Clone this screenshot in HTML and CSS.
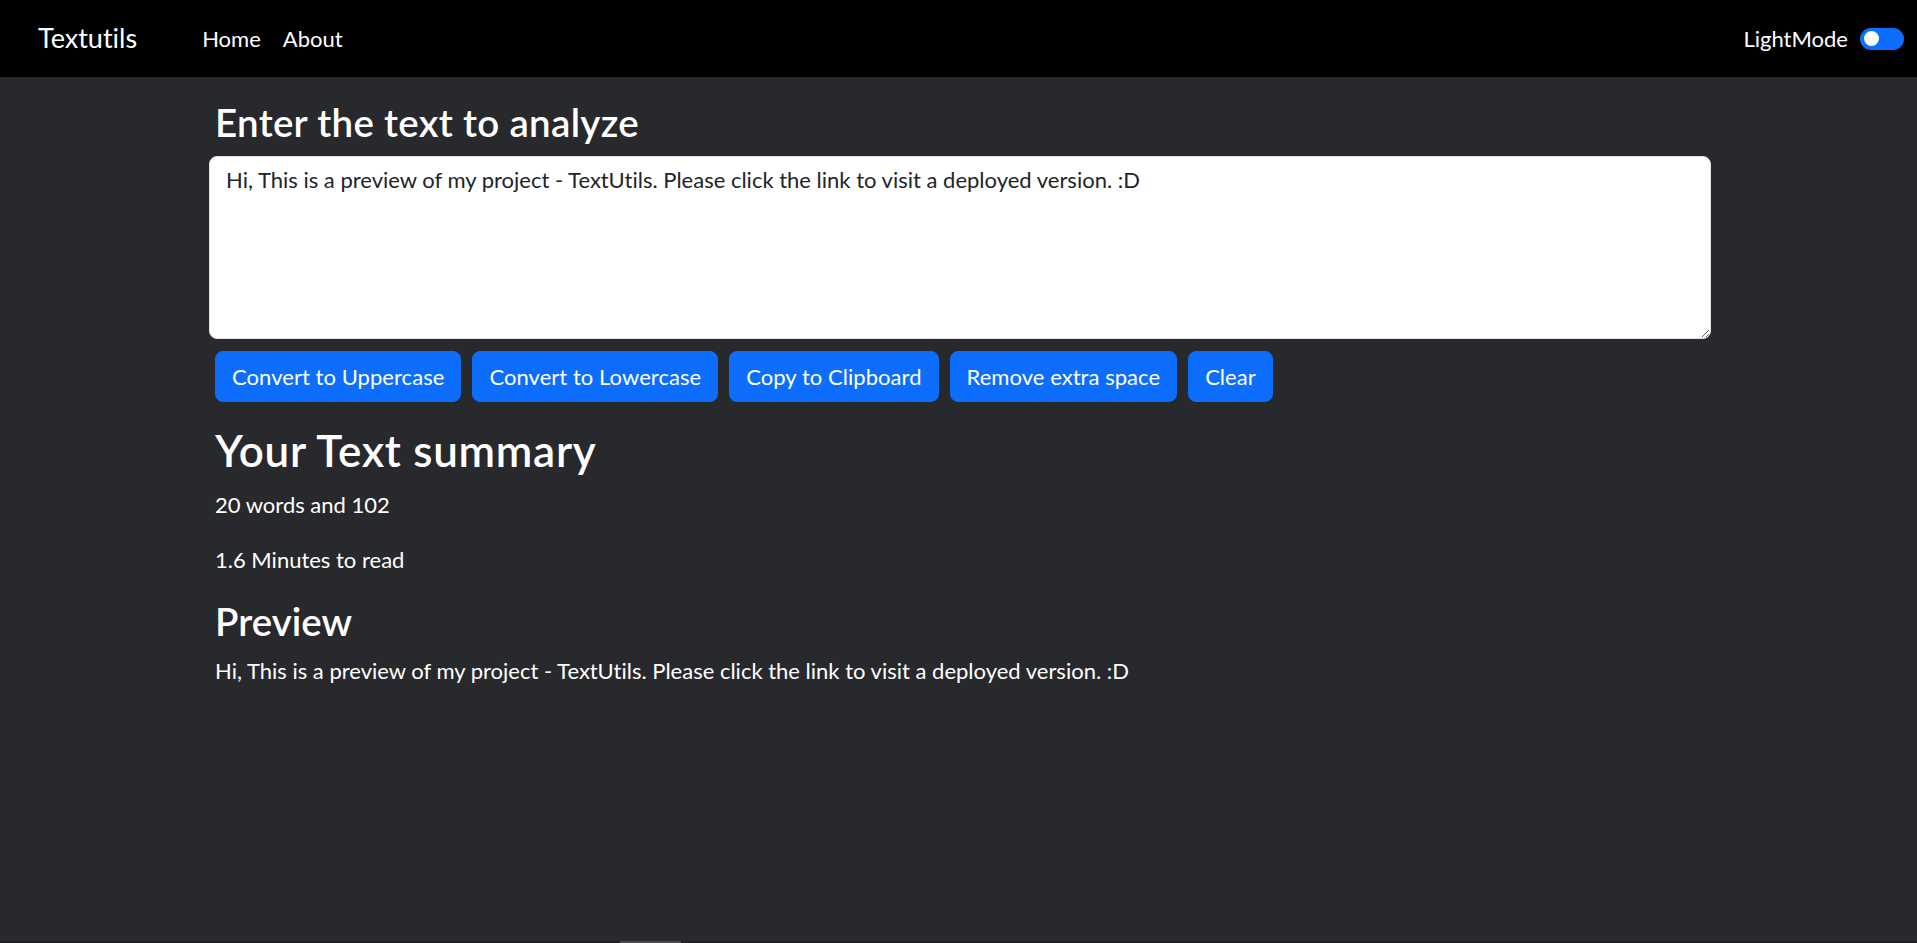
FILE: index.html
```html
<!DOCTYPE html>
<html lang="en">
<head>
<meta charset="utf-8">
<title>TextUtils</title>
<link rel="stylesheet" href="styles.css">
</head>
<body>
<nav class="navbar">
  <a class="brand" href="#">Textutils</a>
  <ul class="nav-links">
    <li><a class="nav-link active" href="#">Home</a></li>
    <li><a class="nav-link" href="#">About</a></li>
  </ul>
  <div class="mode-switch">
    <label class="mode-label" for="mode">LightMode</label>
    <span class="switch" id="mode"><span class="knob"></span></span>
  </div>
</nav>

<main class="page">
  <h3 class="title">Enter the text to analyze</h3>
  <textarea class="text-input" rows="5">Hi, This is a preview of my project - TextUtils. Please click the link to visit a deployed version. :D</textarea>
  <div class="actions">
    <button class="btn">Convert to Uppercase</button>
    <button class="btn">Convert to Lowercase</button>
    <button class="btn">Copy to Clipboard</button>
    <button class="btn">Remove extra space</button>
    <button class="btn">Clear</button>
  </div>

  <section class="summary">
    <h2 class="summary-title">Your Text summary</h2>
    <p class="stat">20 words and 102</p>
    <p class="stat">1.6 Minutes to read</p>
    <h3 class="preview-title">Preview</h3>
    <p class="preview-text">Hi, This is a preview of my project - TextUtils. Please click the link to visit a deployed version. :D</p>
  </section>
</main>

<div class="hscroll"><span class="hscroll-thumb"></span></div>
</body>
</html>
```

FILE: styles.css
```css
* { box-sizing: border-box; }

html, body {
  margin: 0;
  padding: 0;
}

body {
  background: #28292c;
  color: #ffffff;
  font-family: Lato, "Noto Sans", "Liberation Sans", sans-serif;
  font-size: 22px;
  line-height: 1.5;
  font-variant-ligatures: none;
  min-height: 943px;
}

/* ---------- navbar ---------- */
.navbar {
  height: 77px;
  background: #000000;
  display: flex;
  align-items: center;
  padding: 0 13px 0 38px;
}

.brand {
  color: #ffffff;
  text-decoration: none;
  font-size: 27px;
  line-height: 1.5;
  margin-right: 54px;
}

.nav-links {
  list-style: none;
  margin: 0;
  padding: 0;
  display: flex;
}

.nav-link {
  display: block;
  color: #ffffff;
  text-decoration: none;
  font-size: 22px;
  padding: 0 11px;
}

.mode-switch {
  margin-left: auto;
  display: flex;
  align-items: center;
  gap: 12px;
}

.mode-label {
  color: #ffffff;
  font-size: 22px;
}

.switch {
  width: 44px;
  height: 22px;
  border-radius: 11px;
  background: #0d6efd;
  display: flex;
  align-items: center;
  padding-left: 4px;
}

.knob {
  width: 15px;
  height: 15px;
  border-radius: 50%;
  background: #ffffff;
}

/* ---------- page ---------- */
.page {
  padding: 22px 206px 0 209px;
}

.title,
.preview-title {
  font-size: 38.5px;
  line-height: 1.2;
  font-weight: 600;
  letter-spacing: 0.3px;
  margin: 0 0 11px;
  padding-left: 6px;
}

.text-input {
  display: block;
  width: 100%;
  height: 183px;
  margin: 0;
  padding: 6px 16px;
  border: 1px solid #dee2e6;
  border-radius: 8px;
  background: #ffffff;
  color: #212529;
  font-family: inherit;
  font-size: 22px;
  line-height: 1.5;
  font-variant-ligatures: none;
  resize: vertical;
}

.actions {
  display: flex;
  gap: 11px;
  margin-top: 12px;
  padding-left: 6px;
}

.btn {
  background: #0d6efd;
  color: #ffffff;
  border: 1px solid #0d6efd;
  border-radius: 8px;
  font-family: inherit;
  font-size: 22px;
  line-height: 1.5;
  letter-spacing: 0.05px;
  padding: 8px 16px;
  cursor: pointer;
}

.summary {
  margin-top: 22px;
  padding-left: 6px;
}

.summary-title {
  font-size: 44px;
  line-height: 1.2;
  font-weight: 600;
  letter-spacing: 0.7px;
  margin: 0 0 11px;
}

.stat {
  margin: 0 0 22px;
}

.preview-title {
  margin: 1px 0 10px;
  padding-left: 0;
  letter-spacing: 0;
}

.preview-text {
  margin: 0;
}

/* bottom scrollbar strip */
.hscroll {
  position: fixed;
  left: 0;
  right: 0;
  bottom: 0;
  height: 2px;
  background: #1f2023;
}

.hscroll-thumb {
  position: absolute;
  left: 620px;
  top: 0;
  width: 61px;
  height: 2px;
  background: #4b4b4b;
}
```
